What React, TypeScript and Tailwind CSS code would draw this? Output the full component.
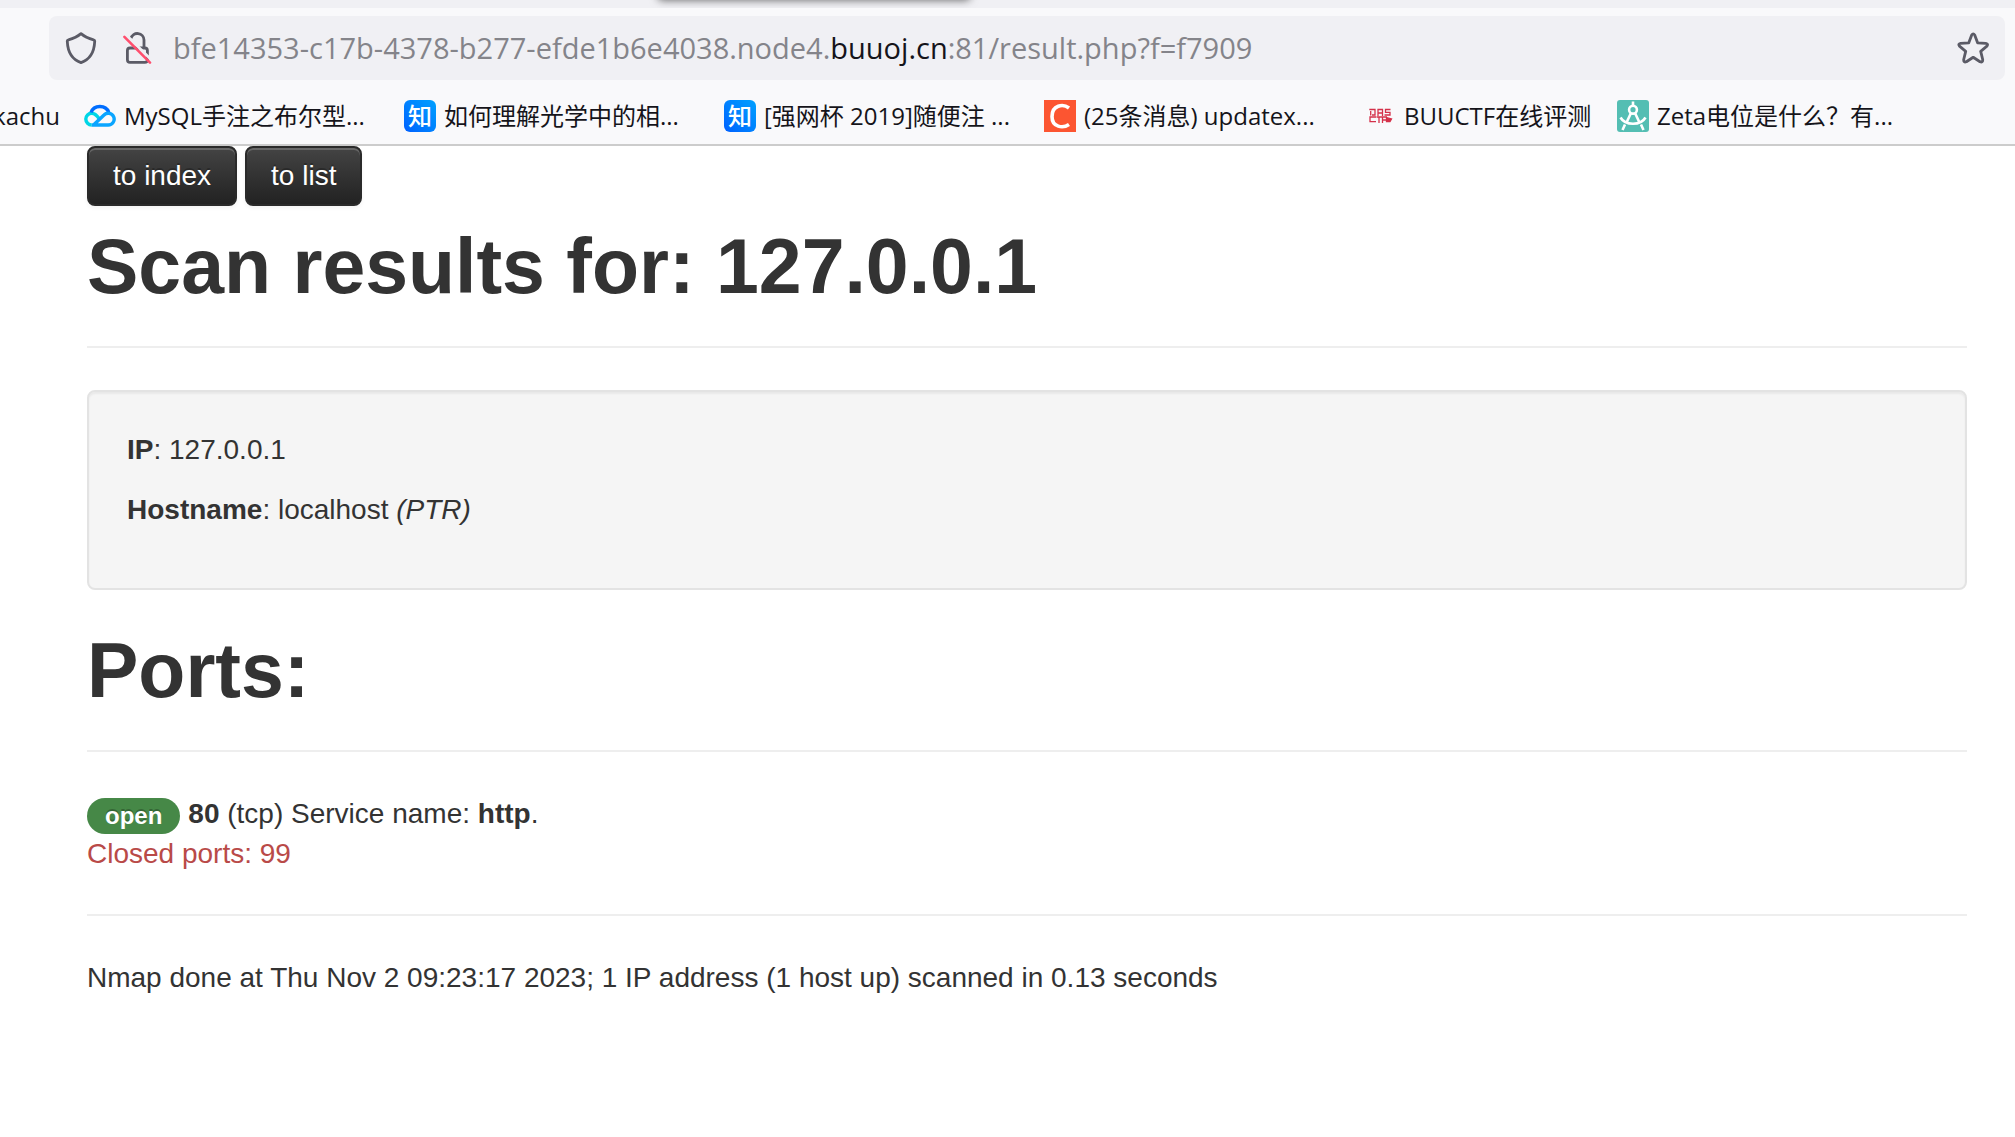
import React from "react";

const uiFont = "font-['Open_Sans','Noto_Sans_CJK_SC',sans-serif]";

function ShieldIcon() {
  return (
    <svg className="h-8 w-8" viewBox="0 0 32 32" fill="none" stroke="#5b5b66" strokeWidth="2.8" strokeLinejoin="round">
      <path d="M16 1.6 C19 4.2 24 6.6 28.600 7.8 C29.500 8 29.800 8.600 29.700 9.500 C29.300 18.500 26.500 27 16 30.600 C5.500 27 2.700 18.500 2.300 9.500 C2.200 8.600 2.500 8 3.400 7.800 C8 6.600 13 4.200 16 1.600 Z" />
    </svg>
  );
}

function InsecureIcon() {
  return (
    <svg className="h-8 w-8" viewBox="0 0 32 32" fill="none">
      <path d="M10 6.500 A6.600 6.600 0 0 1 23 8 V15" stroke="#5b5b66" strokeWidth="2.8" />
      <rect x="6.400" y="16" width="20" height="14.400" rx="2.600" stroke="#5b5b66" strokeWidth="2.8" />
      <path d="M5 2.800 L31.500 29" stroke="#f0f0f4" strokeWidth="3" />
      <path d="M3.400 4.800 L29 30.600" stroke="#ff4f6e" strokeWidth="2.6" strokeLinecap="round" />
    </svg>
  );
}

function StarIcon() {
  return (
    <svg className="h-8 w-8" viewBox="0 0 32 32" fill="none" stroke="#5b5b66" strokeWidth="2.8" strokeLinejoin="round">
      <path d="M14.700 3 Q16.200 0.800 17.700 3 L20.600 10.800 L28.800 11.300 Q31.600 11.900 29.900 14.200 L23.700 19.300 L25.700 27.500 Q25.900 30.800 23 29.700 L16.200 25.300 L9.400 29.700 Q6.500 30.800 6.700 27.500 L8.700 19.300 L2.500 14.200 Q0.800 11.900 3.600 11.300 L11.800 10.800 Z" />
    </svg>
  );
}

function CloudIcon() {
  return (
    <svg className="h-8 w-8 shrink-0" viewBox="0 0 32 32" fill="none" strokeWidth="3.4">
      <path d="M15 18.500 Q11.500 13.200 7.700 13.200 A5.900 5.900 0 0 0 7.700 25" stroke="#00d6e6" />
      <path d="M7 12.500 A9.500 9 0 0 1 24.800 12.300" stroke="#006eff" />
      <path d="M7.700 25 H24.200 A5.900 5.900 0 1 0 20 15 L9.500 25" stroke="#0aa5ff" />
    </svg>
  );
}

function ZhihuIcon() {
  return (
    <span className="flex h-8 w-8 shrink-0 items-center justify-center rounded-md bg-linear-to-tr from-[#0060ff] to-[#00a0ff] text-2xl leading-8 font-medium text-white">
      知
    </span>
  );
}

function CsdnIcon() {
  return (
    <svg className="h-8 w-8 shrink-0" viewBox="0 0 32 32" fill="none">
      <rect width="32" height="32" fill="#fc5531" />
      <path d="M25 8 C19 3.500 8 5 8 16.500 C8 27.500 19 28.500 25 24.500" stroke="#fff" strokeWidth="3.600" />
    </svg>
  );
}

function DasIcon() {
  return (
    <svg className="h-8 w-8 shrink-0" viewBox="0 0 32 32" fill="none" stroke="#d4314a" strokeWidth="1.300">
      <path d="M6.700 15.500 V11 M5.300 9.500 H11 V15 H8 M14 16 V9.500 H18.500 V16 M14 13 H18.500 M26.500 9.500 H21.500 V12.300 H26 V15 H20.500" />
      <path d="M12 17 H6 V21.700 H12 M12.500 17 H18 M15 17 V23 M18.500 23 V17 H23 M18.500 20 H22" />
      <path d="M22.500 17.500 L27.500 19 L26 21.500 L22.500 21.500 Z" fill="#d4314a" />
    </svg>
  );
}

function CompassIcon() {
  return (
    <svg className="h-8 w-8 shrink-0" viewBox="0 0 32 32" fill="none" stroke="#fff" strokeWidth="2.600">
      <rect width="32" height="32" rx="3" fill="#54beb3" stroke="none" />
      <circle cx="16" cy="9.700" r="3.900" />
      <path d="M16 1.500 V6 M14 13 L10 21.500 M18 13 L22 21.500 M8 24.500 L5.500 30 M24 24.500 L26.500 30 M3.500 17.500 Q7 23.700 16 23.700 Q25 23.700 28.500 17.500" />
    </svg>
  );
}

const bookmarks = [
  { icon: <CloudIcon />, label: "MySQL手注之布尔型...", width: "w-80" },
  { icon: <ZhihuIcon />, label: "如何理解光学中的相...", width: "w-80" },
  { icon: <ZhihuIcon />, label: "[强网杯 2019]随便注 ...", width: "w-80" },
  { icon: <CsdnIcon />, label: "(25条消息) updatex...", width: "w-80" },
  { icon: <DasIcon />, label: "BUUCTF在线评测", width: "w-[253px]" },
  { icon: <CompassIcon />, label: "Zeta电位是什么？有...", width: "w-80" },
];

function BrowserChrome() {
  return (
    <header className={`${uiFont} border-b-2 border-[#cccccc] bg-[#f9f9fb] text-[#15141a]`}>
      <div className="relative h-2 overflow-hidden bg-[#f0f0f4]">
        <div className="absolute -top-4 left-[658px] h-4 w-[312px] rounded shadow-[0_0_8px_rgba(0,0,0,0.6)]" />
      </div>
      <div className="pt-2 pr-[10px] pl-[49px]">
        <div className="flex h-16 items-center rounded-lg bg-[#f0f0f4] px-4">
          <button aria-label="Tracking protection"><ShieldIcon /></button>
          <button aria-label="Connection not secure" className="ml-6"><InsecureIcon /></button>
          <div className="ml-5 flex-1 text-[29px] leading-10 whitespace-nowrap text-[#84848a]">
            bfe14353-c17b-4378-b277-efde1b6e4038.node4.<span className="text-[#15141a]">buuoj.cn</span>:81/result.php?f=f7909
          </div>
          <button aria-label="Bookmark this page"><StarIcon /></button>
        </div>
      </div>
      <nav aria-label="Bookmarks" className="flex h-16 items-center overflow-hidden pt-2 text-2xl leading-8 whitespace-nowrap">
        <a href="#" className="flex w-[84px] shrink-0 justify-end pr-6">kachu</a>
        {bookmarks.map((b) => (
          <a key={b.label} href="#" className={`flex shrink-0 items-center gap-2 ${b.width}`}>
            {b.icon}
            <span>{b.label}</span>
          </a>
        ))}
      </nav>
    </header>
  );
}

function DarkButton({ children }: { children: React.ReactNode }) {
  return (
    <button className="rounded-lg border-2 border-[#2a2a2a] bg-linear-to-b from-[#444444] to-[#222222] px-6 py-2 text-white shadow-[inset_0_2px_0_rgba(255,255,255,0.2),0_2px_4px_rgba(0,0,0,0.05)] text-shadow-[0_-2px_0_rgba(0,0,0,0.25)]">
      {children}
    </button>
  );
}

function Rule() {
  return <hr className="mt-10 mb-[42px] border-t-2 border-[#eeeeee]" />;
}

export default function App() {
  return (
    <div className="min-h-screen bg-white">
      <BrowserChrome />
      <main className="pr-12 pl-[87px] font-['Liberation_Sans',Arial,sans-serif] text-[28px] leading-10 text-[#333333]">
        <div className="flex gap-2">
          <DarkButton>to index</DarkButton>
          <DarkButton>to list</DarkButton>
        </div>
        <h1 className="mt-5 text-[77px] leading-20 font-bold">Scan results for: 127.0.0.1</h1>
        <Rule />
        <section className="rounded-lg border-2 border-[#e3e3e3] bg-[#f5f5f5] p-[38px] shadow-[inset_0_2px_2px_rgba(0,0,0,0.05)]">
          <p className="mb-5"><strong>IP</strong>: 127.0.0.1</p>
          <p className="mb-5"><strong>Hostname</strong>: localhost <em>(PTR)</em></p>
        </section>
        <h1 className="mt-10 text-[77px] leading-20 font-bold">Ports:</h1>
        <Rule />
        <div className="flex items-center gap-2">
          <span className="mt-1 rounded-full bg-[#468847] px-[18px] py-1 text-2xl leading-7 font-bold text-white text-shadow-[0_-2px_0_rgba(0,0,0,0.25)]">open</span>
          <p><strong>80</strong> (tcp) Service name: <strong>http</strong>.</p>
        </div>
        <p className="text-[#b94a48]">Closed ports: 99</p>
        <Rule />
        <p>Nmap done at Thu Nov 2 09:23:17 2023; 1 IP address (1 host up) scanned in 0.13 seconds</p>
      </main>
    </div>
  );
}
